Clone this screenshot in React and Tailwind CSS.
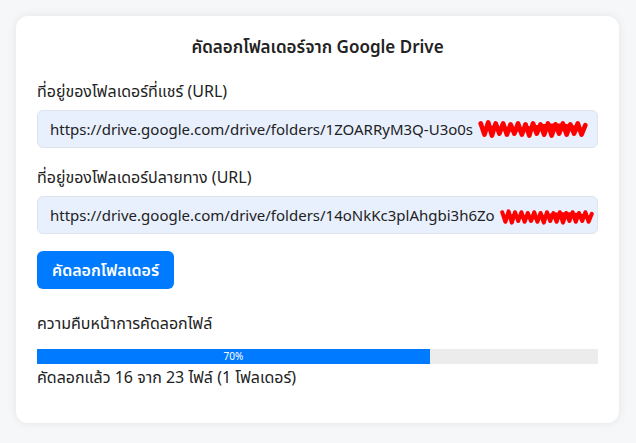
import React from 'react';

const Scribble = ({ className }) => (
  <svg className={className} viewBox="0 0 120 24" fill="none">
    <path
      d="M4 6 L8 18 L12 5 L16 19 L20 6 L24 17 L28 6 L32 18 L36 7 L40 17 L44 6 L48 18 L52 7 L56 19 L60 6 L64 17 L68 7 L72 18 L76 6 L80 19 L84 7 L88 17 L92 6 L96 18 L100 7 L104 17 L108 6 L112 18 L116 8 M6 12 C20 8 40 16 60 11 S100 9 114 13"
      stroke="#ff0000"
      strokeWidth="5"
      strokeLinecap="round"
      strokeLinejoin="round"
    />
  </svg>
);

const UrlField = ({ label, value, scribbleClass }) => (
  <div className="mb-[17px]">
    <label className="block text-[16px] text-[#222] mb-[7px]">{label}</label>
    <div className="relative">
      <input
        readOnly
        value={value}
        className="w-full h-[38px] px-3 rounded-md border border-[#dfe3ea] bg-[#e8f0fe] text-[15px] text-[#222] outline-none"
      />
      <Scribble className={scribbleClass} />
    </div>
  </div>
);

const App = () => {
  const percent = 70;

  return (
    <div className="min-h-screen bg-[#f6f7f9] pl-4 pr-[17px] pt-4" style={{ fontFamily: '"Noto Sans", "Noto Sans Thai", sans-serif' }}>
      <div className="bg-white rounded-xl shadow-[0_0_10px_rgba(0,0,0,0.08)] px-[21px] pt-[18px] pb-[34px]">
        <h2 className="text-center text-[17px] font-semibold text-[#222] mb-[19px]">คัดลอกโฟลเดอร์จาก Google Drive</h2>

        <UrlField
          label="ที่อยู่ของโฟลเดอร์ที่แชร์ (URL)"
          value="https://drive.google.com/drive/folders/1ZOARRyM3Q-U3o0s"
          scribbleClass="absolute left-[440px] top-[6px] w-[112px] h-[26px]"
        />
        <UrlField
          label="ที่อยู่ของโฟลเดอร์ปลายทาง (URL)"
          value="https://drive.google.com/drive/folders/14oNkKc3plAhgbi3h6Zo"
          scribbleClass="absolute left-[462px] top-[7px] w-[96px] h-[28px]"
        />

        <button className="bg-[#007bff] text-white font-semibold text-[16px] rounded-md px-[15px] h-[38px]">คัดลอกโฟลเดอร์</button>

        <div className="mt-[22px] text-[16px] text-[#222]">ความคืบหน้าการคัดลอกไฟล์</div>

        <div className="mt-[14px] h-[15px] bg-[#ececec] w-full">
          <div className="h-full bg-[#007bff] flex items-center justify-center text-white text-[10px]" style={{ width: `${percent}%` }}>
            {percent}%
          </div>
        </div>
        <div className="mt-px text-[16px] text-[#222]">คัดลอกแล้ว 16 จาก 23 ไฟล์ (1 โฟลเดอร์)</div>
      </div>
    </div>
  );
};

export default App;
